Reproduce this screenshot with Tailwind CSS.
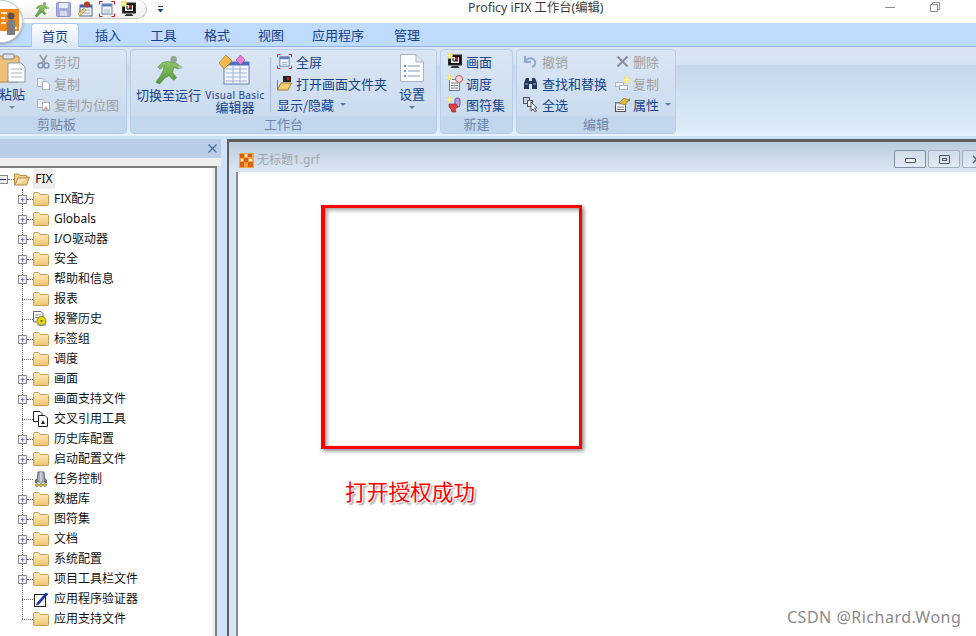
<!DOCTYPE html>
<html lang="zh">
<head>
<meta charset="utf-8">
<title>Proficy iFIX 工作台(编辑)</title>
<script src="https://cdn.jsdelivr.net/npm/@tailwindcss/browser@4"></script>
</head>
<body class="w-[976px] h-[636px] overflow-hidden bg-white">
<svg width="0" height="0" class="absolute">
<defs>
<linearGradient id="fg" x1="0" y1="0" x2="0" y2="1"><stop offset="0" stop-color="#fdf0c4"/><stop offset="1" stop-color="#eec36f"/></linearGradient>
<linearGradient id="gr" x1="0" y1="0" x2="0" y2="1"><stop offset="0" stop-color="#8fc46a"/><stop offset="1" stop-color="#4f9a3a"/></linearGradient>
<symbol id="folder" viewBox="0 0 16 14"><path d="M.5 3V12.5a1 1 0 0 0 1 1H14.5a1 1 0 0 0 1-1V3.5a1 1 0 0 0-1-1H7L5.5.5H2a1.5 1.5 0 0 0-1.500 1.500Z" fill="url(#fg)" stroke="#c79a52"/></symbol>
<symbol id="run" viewBox="0 0 32 32"><circle cx="21" cy="4.500" r="3.500" fill="#9aa39a"/><path d="M14 7 23 8 28 12 26 15 21 13 20 19 24 24 21 27 16 22 11 25 6 31 2 29 7 22 10 16 11 11 7 15 4 13 9 8Z" fill="url(#gr)" stroke="#3f7f32" stroke-width=".6"/><circle cx="28" cy="13" r="2" fill="#b5bcb5"/></symbol>
<symbol id="full" viewBox="0 0 16 16"><rect x="3" y="3" width="10" height="10" fill="#eef3fa" stroke="#6a80a8"/><rect x="3" y="3" width="10" height="2.500" fill="#5f80c0"/><path d="M5 9H11M5 11H11" stroke="#a9b7cf"/><path d="M.5 3.500V.5H3.500M12.500.5H15.500V3.500M15.500 12.500V15.500H12.500M3.500 15.500H.5V12.500" fill="none" stroke="#e01010"/></symbol>
<symbol id="pic" viewBox="0 0 16 16"><rect x="1.500" y="2" width="13" height="10" fill="#111" stroke="#333"/><rect x="4" y="4" width="8" height="6" fill="#f5f5f5"/><rect x="8" y="4" width="3" height="4" fill="#c81818"/><path d="M6 5V8H11" fill="none" stroke="#111"/><path d="M5 13H11L12.500 15H3.500Z" fill="#333"/><rect x="0" y="0" width="5.500" height="5.500" fill="#f2e06a"/><path d="M0 2.700H5.500M2.700 0V5.500" stroke="#fff8c0"/></symbol>
<symbol id="sparkle" viewBox="0 0 6 6"><rect width="6" height="6" fill="#f2e06a"/><path d="M0 3H6M3 0V6" stroke="#fff8c0"/></symbol>
<symbol id="caret" viewBox="0 0 6 3"><path d="M0 0H6L3 3Z" fill="currentColor"/></symbol>
<symbol id="docs" viewBox="0 0 16 16"><path d="M.5.500H7L9 2.500V10.500H.5Z" fill="#fff" stroke="#222"/><path d="M5.500 4.500H12L14.500 7V15.500H5.500Z" fill="#fff" stroke="#222"/><path d="M8 13 10 9 12 13Z" fill="#222"/></symbol>
</defs>
</svg>

<div class="relative w-[976px] h-[636px] overflow-hidden font-['Noto_Sans_CJK_SC','Noto_Sans',sans-serif] text-[13px] leading-none text-[#15428b]">

  <!-- application button -->
  <div class="absolute -left-[20px] z-10 top-0 w-[43px] h-[43px] rounded-full bg-white border border-[#bcc7d6] shadow-[0_1px_3px_#8899aa] flex items-center justify-end pr-[2px]">
    <svg width="21" height="28" viewBox="0 0 21 28"><rect x="0" y="1" width="20" height="22" fill="#ee8a1e"/><path d="M2 5H8M2 10H6M2 15H7M12 20H18" stroke="#fff" stroke-width="1.500"/><circle cx="12" cy="8" r="3.500" fill="#555"/><path d="M8 27V15a4 3.500 0 0 1 8 0V27Z" fill="#7d7d7d"/></svg>
  </div>

  <!-- title bar -->
  <header class="h-[23px] flex items-start text-[#3b3b3b]">
    <div class="ml-[24px] w-[123px] h-[19px] rounded-r-full rounded-bl-[14px] border-b border-r border-[#c4c4c4] bg-gradient-to-b from-white to-[#efefef] flex items-center pl-[10px] gap-[6px]">
      <svg width="16" height="17"><use href="#run"/></svg>
      <svg width="15" height="15" viewBox="0 0 15 15"><rect x=".5" y=".5" width="14" height="14" rx="1" fill="#a7aede" stroke="#8d93c4"/><rect x="3" y="1" width="9" height="5" fill="#e8eaf6"/><rect x="4" y="9" width="7" height="5" fill="#d6d8ee"/></svg>
      <svg width="16" height="16" viewBox="0 0 16 16"><rect x="3" y="4" width="12" height="11" fill="#f2f5fa" stroke="#4a66a0"/><rect x="3" y="4" width="12" height="2.500" fill="#3b62b0"/><path d="M6 9H13M6 12H13" stroke="#8fa3c8"/><circle cx="10" cy="3.500" r="3" fill="#b0402a"/><path d="M1 13 7 7 9 9 3 15Z" fill="#e3c66a" stroke="#9f8a40" stroke-width=".5"/></svg>
      <svg width="16" height="16"><use href="#full"/></svg>
      <svg width="16" height="16"><use href="#pic"/></svg>
    </div>
    <svg class="ml-[10px] mt-[6px] text-[#15428b]" width="7" height="7" viewBox="0 0 7 7"><path d="M1 .5H6" stroke="currentColor"/><path d="M.5 3H6.500L3.500 6.500Z" fill="currentColor"/></svg>
    <div class="ml-[304px] mt-[0px] h-[17px] flex items-center text-[12.300px] font-['Noto_Sans','Noto_Sans_CJK_SC',sans-serif] whitespace-nowrap">Proficy iFIX 工作台(编辑)</div>
    <div class="ml-auto flex items-start">
      <span class="block mt-[7px] w-[10px] h-px bg-[#8c8c8c]"></span>
      <svg class="ml-[35px] mt-[2px] mr-[36px]" width="10" height="10" viewBox="0 0 10 10"><path d="M2.500 2.500V.5H9.500V7.500H7.500M.5 2.500H7.500V9.500H.5Z" fill="none" stroke="#8c8c8c"/></svg>
    </div>
  </header>

  <!-- tabs -->
  <nav class="h-[24px] bg-[#bfdbff] border-b border-[#8db2e3] flex pl-[31px] text-[13px]">
    <div class="w-[48px] h-[24px] rounded-t-[4px] border border-b-0 border-[#a8c8ec] bg-gradient-to-b from-white to-[#dce8f6] flex items-center justify-center">首页</div>
    <div class="w-[58px] flex items-center justify-center">插入</div>
    <div class="w-[53px] flex items-center justify-center">工具</div>
    <div class="w-[54px] flex items-center justify-center">格式</div>
    <div class="w-[54px] flex items-center justify-center">视图</div>
    <div class="w-[80px] flex items-center justify-center">应用程序</div>
    <div class="w-[58px] flex items-center justify-center">管理</div>
  </nav>

  <!-- ribbon -->
  <section class="h-[89px] bg-[linear-gradient(#dbe6f4_0,#d6e3f2_17px,#c6d7ed_18px,#dceaf8_80px,#e4f3fe_100%)] flex gap-[3px] pt-[2px]">

    <!-- clipboard -->
    <div class="-ml-[10px] w-[137px] h-[85px] rounded-[4px] border border-[#b9cee6] bg-gradient-to-b from-[#d9e5f3] to-[#c8daef] flex flex-col">
      <div class="h-[66px] flex text-[#a0a0a0]">
        <div class="w-[40px] flex flex-col items-center pt-[4px] text-[#15428b] shrink-0">
          <svg width="30" height="30" viewBox="0 0 30 30" class="-mt-[1px] ml-[2px]"><rect x="1" y="3" width="21" height="26" rx="2" fill="#f0c078" stroke="#b98a48"/><rect x="6" y="1" width="11" height="5" rx="1" fill="#dfe4ea" stroke="#7a8390"/><path d="M11 10H24L28 14V29H11Z" fill="#fff" stroke="#8a97a8"/><path d="M14 16H25M14 20H25M14 24H25" stroke="#a8b5c6"/></svg>
          <span class="mt-[4px] ml-[2px]">粘贴</span>
          <svg class="mt-[6px] ml-[2px] text-[#6f86a8]" width="6" height="3"><use href="#caret"/></svg>
        </div>
        <div class="flex flex-col pl-[5px]">
          <div class="h-[22px] flex items-center gap-[3px]"><svg width="15" height="15" viewBox="0 0 15 15"><path d="M4 1 9 9M11 1 6 9" stroke="#9a9a9a" stroke-width="1.500"/><circle cx="4.500" cy="11.500" r="2.500" fill="none" stroke="#7f93b5" stroke-width="1.500"/><circle cx="10.500" cy="11.500" r="2.500" fill="none" stroke="#7f93b5" stroke-width="1.500"/></svg><span>剪切</span></div>
          <div class="h-[22px] flex items-center gap-[3px]"><svg width="15" height="15" viewBox="0 0 15 15"><path d="M1.500 2.500H7L9 4.500V10.500H1.500Z" fill="#edf1f6" stroke="#a8b2c2"/><path d="M6.500 5.500H11L13.500 8V13.500H6.500Z" fill="#fff" stroke="#a8b2c2"/></svg><span>复制</span></div>
          <div class="h-[21px] flex items-center gap-[3px]"><svg width="15" height="15" viewBox="0 0 15 15"><path d="M1.500 2.500H7L9 4.500V10.500H1.500Z" fill="#edf1f6" stroke="#a8b2c2"/><rect x="6.500" y="5.500" width="7" height="8" fill="#fff" stroke="#a8b2c2"/><path d="M7 13 10 9 13 13Z" fill="#d8a8a0"/></svg><span>复制为位图</span></div>
        </div>
      </div>
      <div class="flex-1 bg-[#c2d6ec] rounded-b-[4px] flex items-center justify-center text-[#6d87ad] pr-[4px] pb-[2px]">剪贴板</div>
    </div>

    <!-- workbench -->
    <div class="w-[307px] h-[85px] rounded-[4px] border border-[#b9cee6] bg-gradient-to-b from-[#d9e5f3] to-[#c8daef] flex flex-col">
      <div class="h-[66px] flex">
        <div class="w-[75px] shrink-0 flex flex-col items-center pt-[5px]">
          <svg width="30" height="30"><use href="#run"/></svg>
          <span class="mt-[3px] whitespace-nowrap text-[13px]">切换至运行</span>
        </div>
        <div class="w-[62px] -ml-[2px] shrink-0 flex flex-col items-center pt-[4px]">
          <svg width="32" height="32" viewBox="0 0 32 32" class="-ml-[2px]"><rect x="6" y="8" width="25" height="22" fill="#f4f7fb" stroke="#5f7fb5"/><rect x="6" y="8" width="25" height="3.500" fill="#4a6fc4"/><path d="M8 15H29M8 19H29M8 23H29M8 27H29M15 12V29M22 12V29" stroke="#9fb2d2"/><path d="M1 9 8 1 14 7 6 15Z" fill="#f2b84a" stroke="#a87a28" stroke-width=".7"/><path d="M18 6 22.500 1 27 6 22.500 11Z" fill="#ec7fd6" stroke="#a84a98" stroke-width=".7"/></svg>
          <span class="mt-[4px] text-[10px] leading-[10px] font-['Noto_Sans',sans-serif] whitespace-nowrap tracking-[.4px]">Visual Basic</span>
          <span class="mt-[1px] leading-[12px] whitespace-nowrap">编辑器</span>
        </div>
        <div class="w-px h-[55px] mt-[7px] bg-[#a7bdd9] ml-[4px]"></div>
        <div class="w-[120px] shrink-0 flex flex-col pl-[6px]">
          <div class="h-[22px] flex items-center gap-[2px]"><svg width="15" height="15"><use href="#full"/></svg><span class="ml-[2px]">全屏</span></div>
          <div class="h-[22px] flex items-center gap-[4px]"><svg width="15" height="15" viewBox="0 0 15 15"><path d="M.5 4V14H11L14.500 7H4L.5 14" fill="#f6cf72" stroke="#a07a28"/><rect x="6" y="0" width="8" height="6" fill="#222"/><rect x="10" y="1" width="2" height="3" fill="#d02020"/></svg><span class="whitespace-nowrap">打开画面文件夹</span></div>
          <div class="h-[21px] flex items-center"><span class="whitespace-nowrap">显示/隐藏</span><svg class="ml-[6px] text-[#5c7aa5]" width="6" height="3"><use href="#caret"/></svg></div>
        </div>
        <div class="w-[42px] shrink-0 flex flex-col items-center pt-[4px]">
          <svg width="24" height="28" viewBox="0 0 24 28"><path d="M.5.5H16L23.500 8V27.500H.5Z" fill="#fbfcfe" stroke="#a9b4c4"/><path d="M16 .5V8H23.500" fill="#e0e6ef" stroke="#a9b4c4"/><path d="M8 12H20M8 17H20M8 22H20" stroke="#8a9ab2"/><circle cx="5" cy="12" r="1" fill="#4a6fa8"/><circle cx="5" cy="17" r="1" fill="#4a6fa8"/><circle cx="5" cy="22" r="1" fill="#4a6fa8"/></svg>
          <span class="mt-[5px]">设置</span>
          <svg class="mt-[6px] text-[#5c7aa5]" width="6" height="3"><use href="#caret"/></svg>
        </div>
      </div>
      <div class="flex-1 bg-[#c2d6ec] rounded-b-[4px] flex items-center justify-center text-[#6d87ad] pb-[2px]">工作台</div>
    </div>

    <!-- new -->
    <div class="w-[73px] h-[85px] rounded-[4px] border border-[#b9cee6] bg-gradient-to-b from-[#d9e5f3] to-[#c8daef] flex flex-col">
      <div class="h-[66px] flex flex-col pl-[6px]">
        <div class="h-[22px] flex items-center gap-[3px]"><svg width="16" height="16"><use href="#pic"/></svg><span>画面</span></div>
        <div class="h-[22px] flex items-center gap-[3px]"><svg width="16" height="16" viewBox="0 0 16 16"><rect x="2.500" y="4.500" width="10" height="11" fill="#fff" stroke="#6a7a92"/><path d="M4 8H11M4 10.500H11M4 13H11" stroke="#6a7a92"/><circle cx="12" cy="4" r="3.500" fill="#f2dada" stroke="#c85050"/><use href="#sparkle" width="5" height="5"/></svg><span>调度</span></div>
        <div class="h-[21px] flex items-center gap-[3px]"><svg width="16" height="16" viewBox="0 0 16 16"><rect x="8" y="1" width="5" height="9" rx="2" fill="#b7a0dc" stroke="#6f5a9a"/><path d="M2 7H9L11 10 8 12 9 15H5L4 12 2 10Z" fill="#e04040" stroke="#901818" stroke-width=".6"/><use href="#sparkle" width="5" height="5"/></svg><span>图符集</span></div>
      </div>
      <div class="flex-1 bg-[#c2d6ec] rounded-b-[4px] flex items-center justify-center text-[#6d87ad] pb-[2px]">新建</div>
    </div>

    <!-- edit -->
    <div class="w-[160px] h-[85px] rounded-[4px] border border-[#b9cee6] bg-gradient-to-b from-[#d9e5f3] to-[#c8daef] flex flex-col">
      <div class="h-[66px] flex">
        <div class="w-[98px] shrink-0 flex flex-col pl-[6px]">
          <div class="h-[22px] flex items-center gap-[4px] text-[#a0a0a0]"><svg width="15" height="15" viewBox="0 0 15 15"><path d="M2 2V8H8M2.500 7.500A5 4.500 0 1 1 9 13" fill="none" stroke="#8fa9d4" stroke-width="2"/></svg><span>撤销</span></div>
          <div class="h-[22px] flex items-center gap-[4px]"><svg width="15" height="15" viewBox="0 0 15 15"><path d="M1 13V7L3 2H6V13ZM9 13V2H12L14 7V13Z" fill="#24385c"/><rect x="6" y="5" width="3" height="3" fill="#24385c"/><path d="M2 8H5M10 8H13" stroke="#9fb4d6"/></svg><span class="whitespace-nowrap">查找和替换</span></div>
          <div class="h-[21px] flex items-center gap-[4px]"><svg width="15" height="15" viewBox="0 0 15 15"><rect x=".5" y=".5" width="6" height="6" fill="#c4ccd8" stroke="#555"/><rect x="4.500" y="3.500" width="5" height="6" fill="#eef0f4" stroke="#555"/><path d="M8 5V14L10 12 12 15 13.500 14 11.500 11H14Z" fill="#fff" stroke="#333" stroke-width=".8"/></svg><span>全选</span></div>
        </div>
        <div class="flex flex-col">
          <div class="h-[22px] flex items-center gap-[3px] text-[#a0a0a0]"><svg width="15" height="15" viewBox="0 0 15 15"><path d="M2.500 2.500 12.500 12.500M12.500 2.500 2.500 12.500" stroke="#8a8f98" stroke-width="2"/></svg><span>删除</span></div>
          <div class="h-[22px] flex items-center gap-[3px] text-[#a0a0a0]"><svg width="15" height="15" viewBox="0 0 15 15"><rect x=".5" y="6.500" width="8" height="4" fill="#f2f5fa" stroke="#a8b5c8"/><rect x="4.500" y="9.500" width="8" height="4" fill="#fff" stroke="#a8b5c8"/><use href="#sparkle" x="9" y="1" width="6" height="6"/></svg><span>复制</span></div>
          <div class="h-[21px] flex items-center gap-[3px]"><svg width="15" height="15" viewBox="0 0 15 15"><rect x=".5" y="5.500" width="10" height="9" fill="#fff" stroke="#555"/><rect x=".5" y="5.500" width="10" height="2" fill="#9fb4d6"/><path d="M2 10H9M2 12.500H9" stroke="#777"/><path d="M4 6 9 1 14 3 10 8Z" fill="#e0b83c" stroke="#86701c" stroke-width=".6"/><path d="M11 5 15 1V4Z" fill="#5c9a3a"/></svg><span>属性</span><svg class="ml-[3px] text-[#5c7aa5]" width="6" height="3"><use href="#caret"/></svg></div>
        </div>
      </div>
      <div class="flex-1 bg-[#c2d6ec] rounded-b-[4px] flex items-center justify-center text-[#6d87ad] pb-[2px]">编辑</div>
    </div>
  </section>

  <!-- body -->
  <main class="h-[500px] flex">
    <!-- left pane -->
    <aside class="w-[227px] h-full shrink-0 flex flex-col bg-[#cfe2f8]">
      <div class="h-[3px] shrink-0 bg-[#c8e2f6]"></div>
      <div class="w-[221px] h-[19px] shrink-0 bg-[#b8cde6] flex items-center justify-end pr-[4px]">
        <svg width="9" height="9" viewBox="0 0 9 9"><path d="M.5.5 8.500 8.500M8.500.5.5 8.500" stroke="#4a6da0" stroke-width="1.300"/></svg>
      </div>
      <div class="w-[221px] h-[8px] shrink-0 bg-[#eeeeee]"></div>
      <div class="w-[217px] flex-1 min-h-0 pt-[1px] border-t-2 border-r-[2px] border-[#7f7f7f] bg-white shadow-[inset_-3px_0_0_#f0f0f0] relative text-[12px] text-[#111] font-['Noto_Sans','Noto_Sans_CJK_SC',sans-serif]">
        <div class="absolute left-[22px] top-[21px] h-[430px] border-l border-dotted border-[#666]"></div>
        <div class="relative h-[20px] flex items-center">
          <span class="w-[8px] h-[9px] bg-[#eee] border-y border-r border-[#888] flex items-center"><span class="w-[6px] h-px bg-[#223a80]"></span></span>
          <span class="w-[6px] border-t border-dotted border-[#666]"></span>
          <svg width="16" height="14" viewBox="0 0 16 14"><path d="M.5 2V13H12.500L15.500 5H12.500V3.500H6L5 2Z" fill="#f3cf85" stroke="#b98a48"/><path d="M1 13 4 6H15" fill="#fbe7b2" stroke="#b98a48"/></svg>
          <span class="ml-[3px] bg-[#eeeeee] h-[20px] w-[22px] flex items-center justify-center">FIX</span>
        </div>
        <div class="relative flex flex-col pl-[18px]">
          <div class="h-[20px] flex items-center"><span class="w-[9px] h-[9px] border border-[#8a8a8a] bg-[#f4f4f8] flex items-center justify-center text-[#223a80] text-[9px] leading-none">+</span><span class="w-[6px] border-t border-dotted border-[#666]"></span><svg width="16" height="14"><use href="#folder"/></svg><span class="ml-[5px]">FIX配方</span></div>
          <div class="h-[20px] flex items-center"><span class="w-[9px] h-[9px] border border-[#8a8a8a] bg-[#f4f4f8] flex items-center justify-center text-[#223a80] text-[9px] leading-none">+</span><span class="w-[6px] border-t border-dotted border-[#666]"></span><svg width="16" height="14"><use href="#folder"/></svg><span class="ml-[5px]">Globals</span></div>
          <div class="h-[20px] flex items-center"><span class="w-[9px] h-[9px] border border-[#8a8a8a] bg-[#f4f4f8] flex items-center justify-center text-[#223a80] text-[9px] leading-none">+</span><span class="w-[6px] border-t border-dotted border-[#666]"></span><svg width="16" height="14"><use href="#folder"/></svg><span class="ml-[5px]">I/O驱动器</span></div>
          <div class="h-[20px] flex items-center"><span class="w-[9px] h-[9px] border border-[#8a8a8a] bg-[#f4f4f8] flex items-center justify-center text-[#223a80] text-[9px] leading-none">+</span><span class="w-[6px] border-t border-dotted border-[#666]"></span><svg width="16" height="14"><use href="#folder"/></svg><span class="ml-[5px]">安全</span></div>
          <div class="h-[20px] flex items-center"><span class="w-[9px] h-[9px] border border-[#8a8a8a] bg-[#f4f4f8] flex items-center justify-center text-[#223a80] text-[9px] leading-none">+</span><span class="w-[6px] border-t border-dotted border-[#666]"></span><svg width="16" height="14"><use href="#folder"/></svg><span class="ml-[5px]">帮助和信息</span></div>
          <div class="h-[20px] flex items-center"><span class="w-[4px]"></span><span class="w-[11px] border-t border-dotted border-[#666]"></span><svg width="16" height="14"><use href="#folder"/></svg><span class="ml-[5px]">报表</span></div>
          <div class="h-[20px] flex items-center"><span class="w-[4px]"></span><span class="w-[11px] border-t border-dotted border-[#666]"></span><svg width="16" height="16" viewBox="0 0 16 16"><path d="M.5.500H8L10 2.500V11H.5Z" fill="#fff" stroke="#667"/><path d="M2 4H8M2 6.500H7" stroke="#8890a0"/><circle cx="8.500" cy="10" r="4.500" fill="#e6d80e" stroke="#8a8210"/><circle cx="8.500" cy="10" r="1" fill="#444"/><path d="M4 14H13" stroke="#889"/></svg><span class="ml-[5px]">报警历史</span></div>
          <div class="h-[20px] flex items-center"><span class="w-[9px] h-[9px] border border-[#8a8a8a] bg-[#f4f4f8] flex items-center justify-center text-[#223a80] text-[9px] leading-none">+</span><span class="w-[6px] border-t border-dotted border-[#666]"></span><svg width="16" height="14"><use href="#folder"/></svg><span class="ml-[5px]">标签组</span></div>
          <div class="h-[20px] flex items-center"><span class="w-[4px]"></span><span class="w-[11px] border-t border-dotted border-[#666]"></span><svg width="16" height="14"><use href="#folder"/></svg><span class="ml-[5px]">调度</span></div>
          <div class="h-[20px] flex items-center"><span class="w-[9px] h-[9px] border border-[#8a8a8a] bg-[#f4f4f8] flex items-center justify-center text-[#223a80] text-[9px] leading-none">+</span><span class="w-[6px] border-t border-dotted border-[#666]"></span><svg width="16" height="14"><use href="#folder"/></svg><span class="ml-[5px]">画面</span></div>
          <div class="h-[20px] flex items-center"><span class="w-[9px] h-[9px] border border-[#8a8a8a] bg-[#f4f4f8] flex items-center justify-center text-[#223a80] text-[9px] leading-none">+</span><span class="w-[6px] border-t border-dotted border-[#666]"></span><svg width="16" height="14"><use href="#folder"/></svg><span class="ml-[5px]">画面支持文件</span></div>
          <div class="h-[20px] flex items-center"><span class="w-[4px]"></span><span class="w-[11px] border-t border-dotted border-[#666]"></span><svg width="16" height="16"><use href="#docs"/></svg><span class="ml-[5px]">交叉引用工具</span></div>
          <div class="h-[20px] flex items-center"><span class="w-[9px] h-[9px] border border-[#8a8a8a] bg-[#f4f4f8] flex items-center justify-center text-[#223a80] text-[9px] leading-none">+</span><span class="w-[6px] border-t border-dotted border-[#666]"></span><svg width="16" height="14"><use href="#folder"/></svg><span class="ml-[5px]">历史库配置</span></div>
          <div class="h-[20px] flex items-center"><span class="w-[9px] h-[9px] border border-[#8a8a8a] bg-[#f4f4f8] flex items-center justify-center text-[#223a80] text-[9px] leading-none">+</span><span class="w-[6px] border-t border-dotted border-[#666]"></span><svg width="16" height="14"><use href="#folder"/></svg><span class="ml-[5px]">启动配置文件</span></div>
          <div class="h-[20px] flex items-center"><span class="w-[4px]"></span><span class="w-[11px] border-t border-dotted border-[#666]"></span><svg width="16" height="16" viewBox="0 0 16 16"><path d="M5 1H11L12 11H4Z" fill="#a8aeb8" stroke="#667"/><path d="M8 1V11" stroke="#eee"/><path d="M2 9 4 7V12H2ZM14 9 12 7V12H14Z" fill="#6a7080"/><circle cx="4" cy="14" r="1.500" fill="#e8d820" stroke="#333" stroke-width=".5"/><circle cx="8" cy="14" r="1.500" fill="#e8d820" stroke="#333" stroke-width=".5"/><circle cx="12" cy="14" r="1.500" fill="#e8d820" stroke="#333" stroke-width=".5"/></svg><span class="ml-[5px]">任务控制</span></div>
          <div class="h-[20px] flex items-center"><span class="w-[9px] h-[9px] border border-[#8a8a8a] bg-[#f4f4f8] flex items-center justify-center text-[#223a80] text-[9px] leading-none">+</span><span class="w-[6px] border-t border-dotted border-[#666]"></span><svg width="16" height="14"><use href="#folder"/></svg><span class="ml-[5px]">数据库</span></div>
          <div class="h-[20px] flex items-center"><span class="w-[9px] h-[9px] border border-[#8a8a8a] bg-[#f4f4f8] flex items-center justify-center text-[#223a80] text-[9px] leading-none">+</span><span class="w-[6px] border-t border-dotted border-[#666]"></span><svg width="16" height="14"><use href="#folder"/></svg><span class="ml-[5px]">图符集</span></div>
          <div class="h-[20px] flex items-center"><span class="w-[9px] h-[9px] border border-[#8a8a8a] bg-[#f4f4f8] flex items-center justify-center text-[#223a80] text-[9px] leading-none">+</span><span class="w-[6px] border-t border-dotted border-[#666]"></span><svg width="16" height="14"><use href="#folder"/></svg><span class="ml-[5px]">文档</span></div>
          <div class="h-[20px] flex items-center"><span class="w-[9px] h-[9px] border border-[#8a8a8a] bg-[#f4f4f8] flex items-center justify-center text-[#223a80] text-[9px] leading-none">+</span><span class="w-[6px] border-t border-dotted border-[#666]"></span><svg width="16" height="14"><use href="#folder"/></svg><span class="ml-[5px]">系统配置</span></div>
          <div class="h-[20px] flex items-center"><span class="w-[9px] h-[9px] border border-[#8a8a8a] bg-[#f4f4f8] flex items-center justify-center text-[#223a80] text-[9px] leading-none">+</span><span class="w-[6px] border-t border-dotted border-[#666]"></span><svg width="16" height="14"><use href="#folder"/></svg><span class="ml-[5px]">项目工具栏文件</span></div>
          <div class="h-[20px] flex items-center"><span class="w-[4px]"></span><span class="w-[11px] border-t border-dotted border-[#666]"></span><svg width="16" height="16" viewBox="0 0 16 16"><rect x="1.500" y="3.500" width="11" height="12" fill="#fff" stroke="#222"/><path d="M4 12 13 2 15 3 6 13 3.500 14Z" fill="#1030c0" stroke="#0a1a70" stroke-width=".5"/></svg><span class="ml-[5px]">应用程序验证器</span></div>
          <div class="h-[20px] flex items-center"><span class="w-[4px]"></span><span class="w-[11px] border-t border-dotted border-[#666]"></span><svg width="16" height="14"><use href="#folder"/></svg><span class="ml-[5px]">应用支持文件</span></div>
        </div>
      </div>
    </aside>

    <!-- MDI area -->
    <div class="flex-1 min-w-0 h-full flex flex-col bg-[#d6e4f4]">
      <div class="h-[3px] shrink-0 bg-[#c8e2f6]"></div>
      <div class="flex-1 min-h-0 border-t-[3px] border-l-[2px] border-[#5f5f5f] flex flex-col">
        <div class="h-[30px] shrink-0 bg-gradient-to-b from-[#bccbdb] to-[#dce7f4] flex items-center pl-[10px] pt-[6px]">
          <svg width="15" height="15" viewBox="0 0 15 15"><rect width="15" height="15" fill="#f2a34a"/><path d="M1 1H5V5H1ZM9 1H13V4H9ZM5 5H9V9H5ZM1 9H5V14H1ZM9 9H14V14H9Z" fill="#d9600c"/><path d="M6 1H8V4H6ZM2 6H4V8H2ZM10 6H13V8H10Z" fill="#fbe8c8"/></svg>
          <span class="ml-[3px] text-[12px] text-[#a3a7ad] font-['Noto_Sans','Noto_Sans_CJK_SC',sans-serif]">无标题1.grf</span>
          <div class="ml-auto flex gap-[2px] -mr-[18px] -mt-[2px]">
            <span class="w-[32px] h-[18px] rounded-[2px] border border-[#7f8ea6] bg-gradient-to-b from-[#d0dcea] to-[#e2ebf8] flex items-center justify-center"><span class="w-[11px] h-[5px] mt-[2px] bg-[#f2f2f2] border border-[#555] rounded-[1px]"></span></span>
            <span class="w-[32px] h-[18px] rounded-[2px] border border-[#a4b0c0] bg-gradient-to-b from-[#d0dcea] to-[#e2ebf8] flex items-center justify-center"><span class="w-[11px] h-[9px] border border-[#555] rounded-[1px] flex items-center justify-center"><span class="w-[5px] h-[3px] border border-[#555]"></span></span></span>
            <span class="w-[32px] h-[18px] rounded-[2px] border border-[#a4b0c0] bg-gradient-to-b from-[#d0dcea] to-[#e2ebf8] flex items-center pl-[9px]"><svg width="9" height="9" viewBox="0 0 9 9"><path d="M1 1 8 8M8 1 1 8" stroke="#555" stroke-width="1.300"/></svg></span>
          </div>
        </div>
        <div class="flex-1 min-h-0 ml-[7px] bg-white border-l-2 border-[#858b92]"></div>
      </div>
    </div>
  </main>

  <!-- annotations drawn over the screenshot -->
  <div class="absolute left-[321px] top-[205px] w-[261px] h-[244px] border-[3px] border-l-[4px] border-[#ff0000] shadow-[2px_2px_4px_#888,inset_2px_2px_4px_#999]"></div>
  <div class="absolute left-[345px] top-[476px] text-[21.700px] leading-[30px] text-[#ff0000] whitespace-nowrap [text-shadow:0_0_1px_#fff,1px_1px_1px_#fff,-1px_-1px_1px_#fff,1px_-1px_1px_#fff,-1px_1px_1px_#fff,2px_2px_2px_#777]">打开授权成功</div>
  <div class="absolute left-[787px] top-[607px] text-[16px] leading-[20px] text-[#8a8a8a] whitespace-nowrap tracking-[.5px] font-['Noto_Sans',sans-serif]">CSDN @Richard.Wong</div>
</div>
</body>
</html>
